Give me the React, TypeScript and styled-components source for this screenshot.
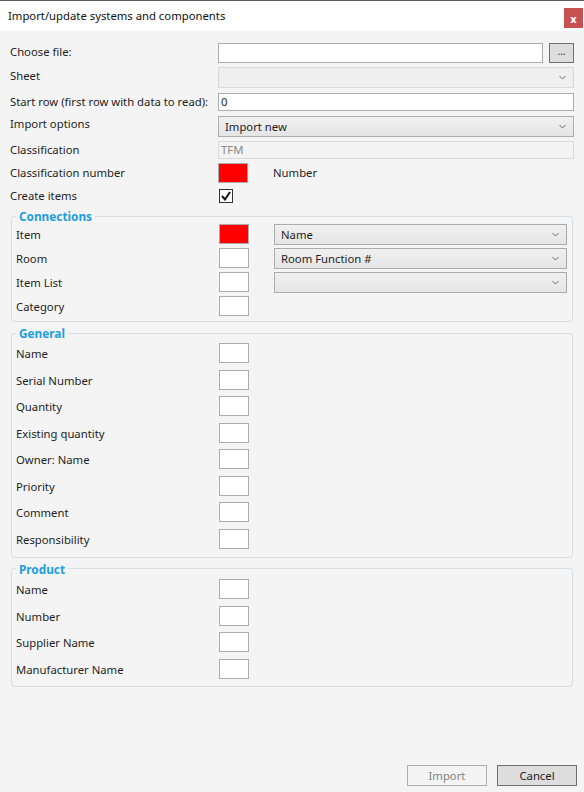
import styled, { createGlobalStyle } from "styled-components";

const GlobalStyle = createGlobalStyle`
  html, body {
    margin: 0;
    padding: 0;
    background: #f4f4f4;
  }
  body {
    font-family: "Segoe UI", "Noto Sans", "Liberation Sans", sans-serif;
    font-size: 11.3px;
    color: #1e1e1e;
  }
  * { box-sizing: border-box; }
`

const Window = styled.div`
  width: 584px;
  height: 792px;
  display: flex;
  flex-direction: column;
  background: #f4f4f4;
`

const TitleBar = styled.div`
  height: 31px;
  flex-shrink: 0;
  background: #ffffff;
  border-top: 1px solid #5c5c5c;
  display: flex;
  align-items: flex-start;
  justify-content: space-between;
  padding-left: 8px;
`

const Title = styled.div`
  line-height: 16px;
  margin-top: 7px;
  color: #111;
`

const CloseButton = styled.div`
  width: 19px;
  height: 20px;
  margin-top: 7px;
  margin-right: 1px;
  background: #c75050;
  color: #fff;
  font-weight: bold;
  font-size: 11px;
  display: flex;
  align-items: center;
  justify-content: center;
`

const Body = styled.div`
  flex: 1;
  display: flex;
  flex-direction: column;
  padding: 12px 10px 0 10px;
`

const Row = styled.div<{ $h: number }>`
  display: flex;
  align-items: flex-start;
  height: ${p => p.$h}px;
`

// $lh: line box used to place the label text against its control
const Label = styled.div<{ $lh: number; $w?: number }>`
  width: ${p => p.$w ?? 208}px;
  flex-shrink: 0;
  line-height: ${p => p.$lh}px;
  white-space: nowrap;
`

const TextBox = styled.div<{ $ch: number; $disabled?: boolean }>`
  flex: 1;
  height: ${p => p.$ch}px;
  background: ${p => (p.$disabled ? "#f4f4f4" : "#ffffff")};
  border: 1px solid ${p => (p.$disabled ? "#d9d9d9" : "#acacac")};
  color: ${p => (p.$disabled ? "#8a8a8a" : "#1e1e1e")};
  padding-left: 2px;
  line-height: ${p => p.$ch - 2}px;
`

const SmallButton = styled.div`
  width: 25px;
  height: 20px;
  margin-left: 6px;
  background: #dddddd;
  border: 1px solid #707070;
  font-size: 10px;
  line-height: 14px;
  text-align: center;
  color: #333;
`

const ComboBox = styled.div<{ $ch: number; $disabled?: boolean }>`
  flex: 1;
  height: ${p => p.$ch}px;
  display: flex;
  align-items: center;
  justify-content: space-between;
  padding: 0 7px 0 6px;
  border: 1px solid ${p => (p.$disabled ? "#d9d9d9" : "#acacac")};
  background: ${p => (p.$disabled ? "#efefef" : "linear-gradient(#f0f0f0, #e5e5e5)")};
  color: #1e1e1e;
`

const Swatch = styled.div<{ $red?: boolean }>`
  width: 30px;
  height: 20px;
  flex-shrink: 0;
  background: ${p => (p.$red ? "#ff0000" : "#ffffff")};
  border: 1px solid #acacac;
`

const SideText = styled.div`
  margin-left: 25px;
  line-height: 19px;
`

const CheckBox = styled.div`
  width: 14px;
  height: 14px;
  margin: 2px 0 0 1px;
  border: 1px solid #333;
  background: #fff;
  display: flex;
  align-items: center;
  justify-content: center;
`

const Group = styled.fieldset<{ $pt: number; $pb: number; $mt: number }>`
  margin: ${p => p.$mt}px 1px 0 1px;
  padding: ${p => p.$pt}px 5px ${p => p.$pb}px 4px;
  border: 1px solid #d5dfe5;
  border-radius: 3px;
  min-width: 0;
`

const Legend = styled.legend`
  padding: 0 3px 0 3px;
  margin-left: 0;
  line-height: 16px;
  font-size: 11.8px;
  font-weight: bold;
  color: #1c9ee0;
`

const GroupRows = styled.div<{ $gap: number }>`
  display: grid;
  grid-auto-rows: 20px;
  row-gap: ${p => p.$gap}px;
`

const GroupRow = styled.div`
  display: flex;
  align-items: flex-start;
  height: 20px;
`

const GroupCombo = styled(ComboBox)`
  margin-left: 25px;
`

const Footer = styled.div`
  flex-shrink: 0;
  display: flex;
  justify-content: flex-end;
  gap: 10px;
  padding: 0 7px 6px 0;
`

const DialogButton = styled.div<{ $disabled?: boolean }>`
  width: 80px;
  height: 21px;
  text-align: center;
  line-height: 19px;
  border: 1px solid ${p => (p.$disabled ? "#adadad" : "#707070")};
  background: ${p => (p.$disabled ? "#f4f4f4" : "#dddddd")};
  color: ${p => (p.$disabled ? "#838383" : "#1e1e1e")};
`

function Chevron() {
  return (
    <svg width="7" height="5" viewBox="0 0 7 5">
      <path d="M0.5 1 L3.5 4 L6.5 1" fill="none" stroke="#666" strokeWidth="1" />
    </svg>
  )
}

function Check() {
  return (
    <svg width="10" height="10" viewBox="0 0 10 10">
      <path d="M1 5 L4 8.5 L9 1" fill="none" stroke="#111" strokeWidth="2" />
    </svg>
  )
}

const connections = [
  { label: "Item", red: true, combo: "Name" },
  { label: "Room", combo: "Room Function #" },
  { label: "Item List", combo: "" },
  { label: "Category" },
]

const general = [
  "Name",
  "Serial Number",
  "Quantity",
  "Existing quantity",
  "Owner: Name",
  "Priority",
  "Comment",
  "Responsibility",
]

const product = ["Name", "Number", "Supplier Name", "Manufacturer Name"]

export default function App() {
  return (
    <>
      <GlobalStyle />
      <Window>
        <TitleBar>
          <Title>Import/update systems and components</Title>
          <CloseButton>x</CloseButton>
        </TitleBar>
        <Body>
          <Row $h={24}>
            <Label $lh={18}>Choose file:</Label>
            <TextBox $ch={20} />
            <SmallButton>...</SmallButton>
          </Row>
          <Row $h={26}>
            <Label $lh={17}>Sheet</Label>
            <ComboBox $ch={21} $disabled>
              <span />
              <Chevron />
            </ComboBox>
          </Row>
          <Row $h={23}>
            <Label $lh={18}>Start row (first row with data to read):</Label>
            <TextBox $ch={18}>0</TextBox>
          </Row>
          <Row $h={25}>
            <Label $lh={16}>Import options</Label>
            <ComboBox $ch={21}>
              <span>Import new</span>
              <Chevron />
            </ComboBox>
          </Row>
          <Row $h={22}>
            <Label $lh={18}>Classification</Label>
            <TextBox $ch={18} $disabled>TFM</TextBox>
          </Row>
          <Row $h={24}>
            <Label $lh={19}>Classification number</Label>
            <Swatch $red />
            <SideText>Number</SideText>
          </Row>
          <Row $h={21}>
            <Label $lh={18}>Create items</Label>
            <CheckBox>
              <Check />
            </CheckBox>
          </Row>

          <Group $pt={0} $pb={5} $mt={0}>
            <Legend>Connections</Legend>
            <GroupRows $gap={4}>
              {connections.map(c => (
                <GroupRow key={c.label}>
                  <Label $lh={22} $w={203}>{c.label}</Label>
                  <Swatch $red={c.red} />
                  {c.combo !== undefined && (
                    <GroupCombo $ch={21}>
                      <span>{c.combo}</span>
                      <Chevron />
                    </GroupCombo>
                  )}
                </GroupRow>
              ))}
            </GroupRows>
          </Group>

          <Group $pt={2} $pb={8} $mt={3}>
            <Legend>General</Legend>
            <GroupRows $gap={6.57}>
              {general.map(g => (
                <GroupRow key={g}>
                  <Label $lh={22} $w={203}>{g}</Label>
                  <Swatch />
                </GroupRow>
              ))}
            </GroupRows>
          </Group>

          <Group $pt={2} $pb={7} $mt={3}>
            <Legend>Product</Legend>
            <GroupRows $gap={6.67}>
              {product.map(g => (
                <GroupRow key={g}>
                  <Label $lh={22} $w={203}>{g}</Label>
                  <Swatch />
                </GroupRow>
              ))}
            </GroupRows>
          </Group>
        </Body>
        <Footer>
          <DialogButton $disabled>Import</DialogButton>
          <DialogButton>Cancel</DialogButton>
        </Footer>
      </Window>
    </>
  )
}
